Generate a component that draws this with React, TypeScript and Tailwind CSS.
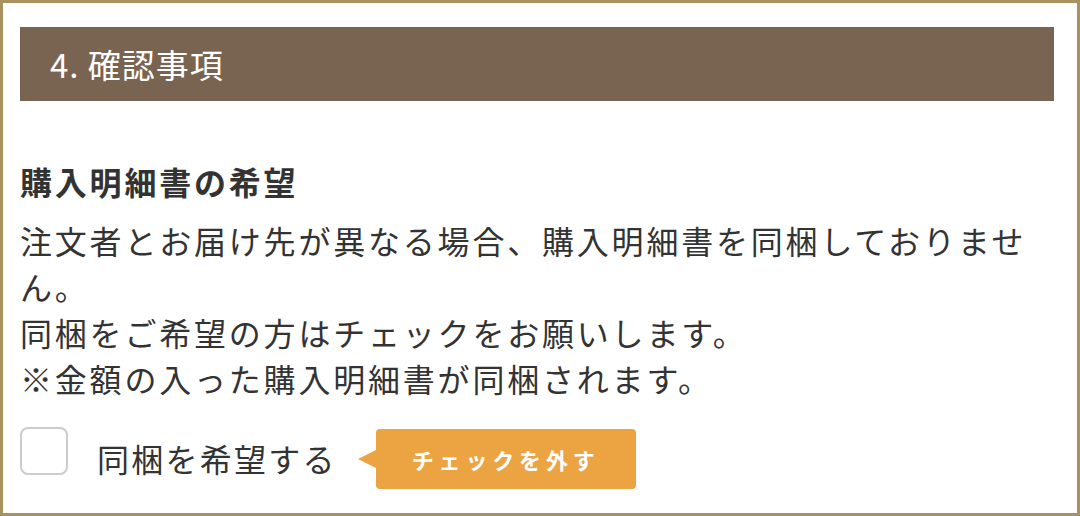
export default function App() {
  return (
    <div
      className="w-[1080px] h-[516px] bg-white border-[3px] border-[#a8925f] overflow-hidden"
      style={{ fontFamily: '"Noto Sans CJK JP", "Noto Sans", sans-serif' }}
    >
      <div className="pt-[24px] pl-[17px] pr-[23px]">
        <div className="h-[74px] bg-[#786451] flex items-center pl-[30px]">
          <h2 className="text-white text-[33px] tracking-[0.03em] leading-none">4. 確認事項</h2>
        </div>
      </div>

      <div className="pl-[17px] pr-[20px] pt-[57px] text-[#333333]">
        <h3 className="text-[32px] font-bold leading-[46px] tracking-[2.8px]">購入明細書の希望</h3>
        <p className="mt-[13px] text-[32px] leading-[46px] tracking-[2.8px]">
          注文者とお届け先が異なる場合、購入明細書を同梱しておりません。
          <br />
          同梱をご希望の方はチェックをお願いします。
          <br />
          ※金額の入った購入明細書が同梱されます。
        </p>

        <div className="mt-[26px] flex items-start">
          <span className="w-[48px] h-[48px] rounded-[8px] border-2 border-[#cccccc] bg-white shrink-0" />
          <span className="ml-[29px] mt-[8px] text-[32px] leading-[46px] tracking-[0.07em]">同梱を希望する</span>
          <div className="ml-[21px] mt-[2px] flex items-center">
            <span className="w-0 h-0 border-y-[9px] border-y-transparent border-r-[18px] border-r-[#eca443]" />
            <span className="w-[260px] h-[60px] rounded-[4px] bg-[#eca443] flex items-center justify-center text-white text-[22px] font-bold tracking-[0.22em]">
              チェックを外す
            </span>
          </div>
        </div>
      </div>
    </div>
  );
}
